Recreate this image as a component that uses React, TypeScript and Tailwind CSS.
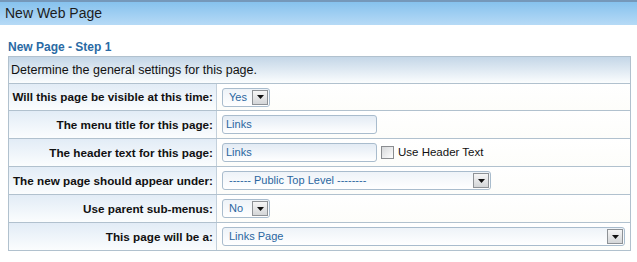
import React from "react";

const ROWS: { label: string; kind: "select" | "input" | "inputcheck"; value: string; w: number; h: string }[] = [
  { label: "Will this page be visible at this time:", kind: "select", value: "Yes", w: 48, h: "h-[27px]" },
  { label: "The menu title for this page:", kind: "input", value: "Links", w: 155, h: "h-[28px]" },
  { label: "The header text for this page:", kind: "inputcheck", value: "Links", w: 155, h: "h-[28px]" },
  { label: "The new page should appear under:", kind: "select", value: "------ Public Top Level --------", w: 269, h: "h-[28px]" },
  { label: "Use parent sub-menus:", kind: "select", value: "No", w: 48, h: "h-[28px]" },
  { label: "This page will be a:", kind: "select", value: "Links Page", w: 403, h: "h-[28px]" },
];

function Arrow() {
  return (
    <span className="flex h-[15px] w-[16px] items-center justify-center border border-[#8e9296] bg-gradient-to-b from-[#f6f6f6] to-[#d4d6d8]">
      <svg width="7" height="4" viewBox="0 0 7 4">
        <path d="M0 0h7L3.5 4z" fill="#111" />
      </svg>
    </span>
  );
}

function Select({ value, w }: { value: string; w: number }) {
  return (
    <div
      className="flex h-[19px] items-center justify-between rounded-[3px] border border-[#a9bccd] bg-gradient-to-b from-[#eef3f8] to-white pl-[6px] pr-[1px] text-[11px] text-[#2a66a0]"
      style={{ width: w }}
    >
      <span className="leading-none">{value}</span>
      <Arrow />
    </div>
  );
}

function Input({ value, w }: { value: string; w: number }) {
  return (
    <div
      className="flex h-[19px] items-center rounded-[3px] border border-[#a9bccd] bg-gradient-to-b from-[#e3ebf4] to-white pl-[3px] text-[11px] text-[#2a66a0]"
      style={{ width: w }}
    >
      <span className="leading-none">{value}</span>
    </div>
  );
}

export default function App() {
  return (
    <div className="h-[262px] w-[637px] overflow-hidden bg-white [font-family:'Liberation_Sans',Arial,sans-serif]">
      {/* Title bar */}
      <div className="h-[25px] border-t-2 border-[#7598ba] bg-gradient-to-b from-[#86c2ee] to-[#b6daf6] pl-[5px] text-[14px] leading-[23px] text-[#1c1c1c]">
        New Web Page
      </div>

      <div className="pl-[8px] pt-[15px] text-[12px] font-bold leading-[14px] text-[#2a6aa4]">New Page - Step 1</div>

      {/* Settings table */}
      <div className="ml-[8px] mt-[2px] w-[623px] border border-[#b1c1ce]">
        <div className="flex h-[26px] items-center bg-gradient-to-b from-[#c4d6e7] to-[#fbfdfe] pl-[2px] text-[12.5px] text-[#111]">
          Determine the general settings for this page.
        </div>
        {ROWS.map((r) => (
          <div key={r.label} className={`flex border-t border-[#b1c1ce] ${r.h}`}>
            <div className="flex w-[208px] items-center justify-end whitespace-nowrap border-r border-[#c3d0db] bg-gradient-to-b from-[#e2ecf6] to-[#fbfdfe] pr-[3px] text-[11.7px] font-bold text-[#111]">
              {r.label}
            </div>
            <div className="flex flex-1 items-center bg-gradient-to-b from-white to-[#fdfdfa] pl-[5px]">
              {r.kind === "select" && <Select value={r.value} w={r.w} />}
              {r.kind !== "select" && <Input value={r.value} w={r.w} />}
              {r.kind === "inputcheck" && (
                <div className="ml-[4px] flex items-center gap-[4px] text-[11.5px] text-[#111]">
                  <span className="h-[13px] w-[13px] border border-[#8a8d90] bg-gradient-to-br from-[#d6d8da] to-white" />
                  Use Header Text
                </div>
              )}
            </div>
          </div>
        ))}
      </div>
    </div>
  );
}
